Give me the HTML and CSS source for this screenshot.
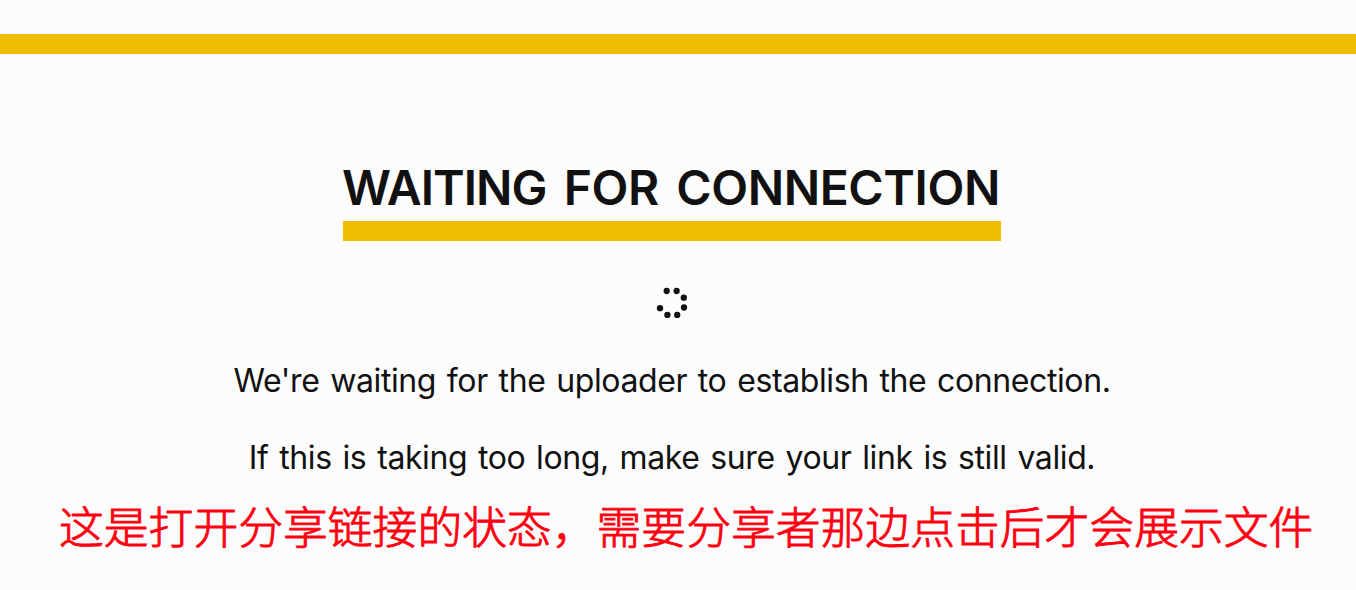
FILE: index.html
```html
<!DOCTYPE html>
<html lang="en">
<head>
<meta charset="utf-8">
<title>Waiting for connection</title>
<link rel="stylesheet" href="styles.css">
</head>
<body>
<div class="bar"></div>
<main class="content">
<h1 class="title"><span class="title-lead">WAITING</span> FOR CONNECTION</h1>
<svg class="spinner" viewBox="0 0 32 32" width="32" height="32"><g fill="#111"><circle cx="10.700" cy="4" r="3.150"/><circle cx="20.600" cy="4" r="3.150"/><circle cx="27.800" cy="10.700" r="3.150"/><circle cx="28" cy="20.500" r="3.150"/><circle cx="21.200" cy="27.900" r="3.150"/><circle cx="11.400" cy="27.900" r="3.150"/><circle cx="4" cy="21.200" r="3.150"/></g></svg>
<p class="message">We're waiting for the uploader to establish the connection.</p>
<p class="message second">If this is taking too long, make sure your link is still valid.</p>
</main>
<p class="note" lang="zh-CN">这是打开分享链接的状态，需要分享者那边点击后才会展示文件</p>
</body>
</html>
```
FILE: styles.css
```css
body { margin: 0; padding-top: 34px; height: 590px; box-sizing: border-box; overflow: hidden; background: #fcfcfc; color: #111; font-family: Inter, "Noto Sans CJK SC", sans-serif; }
.bar { height: 20px; background: #f0bc00; }
.content { display: flex; flex-direction: column; align-items: center; width: 1344px; padding-top: 97px; }
.title { margin: 0; width: 658px; height: 70px; line-height: 74px; border-bottom: 20px solid #f0bc00; font-size: 48px; font-weight: 600; white-space: nowrap; letter-spacing: -0.420px; word-spacing: 5.700px; text-indent: -1px; }
.title-lead { letter-spacing: -1px; }
.spinner { margin-top: 46px; }
.message { margin: 38px 0 0; height: 48px; line-height: 48px; font-size: 32px; white-space: nowrap; letter-spacing: -0.400px; word-spacing: 2.200px; }
.second { margin-top: 29px; }
.note { margin: 13px 0 0 59px; line-height: 60px; font-family: "Noto Sans CJK SC", sans-serif; font-weight: 300; -webkit-text-stroke: 0.900px #ff0010; font-size: 44.800px; color: #ff0010; white-space: nowrap; }
```
